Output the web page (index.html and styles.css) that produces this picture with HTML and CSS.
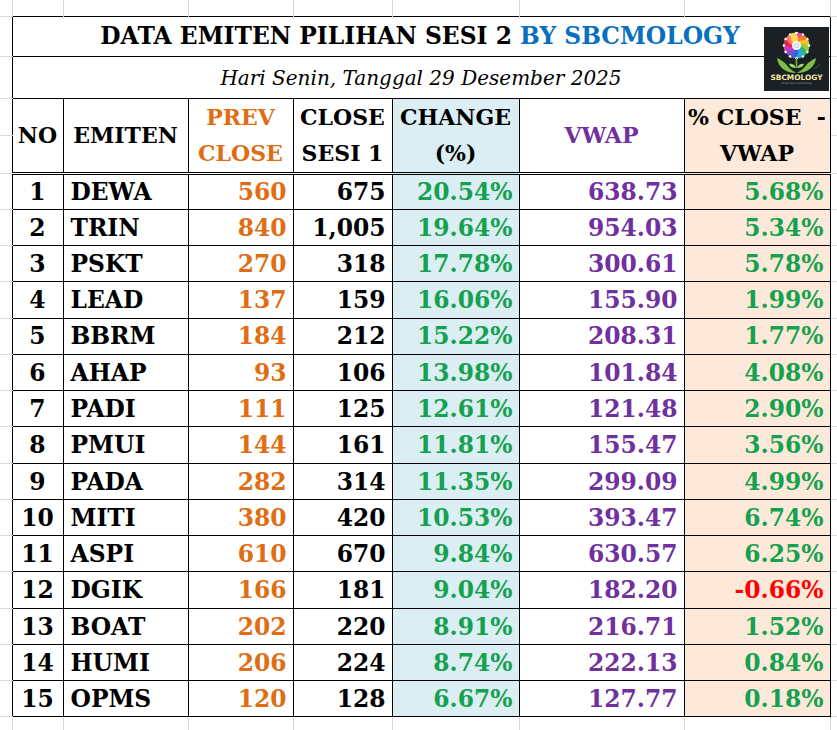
FILE: index.html
```html
<!DOCTYPE html>
<html lang="id">
<head>
<meta charset="utf-8">
<title>Data Emiten Pilihan Sesi 2</title>
<link rel="stylesheet" href="styles.css">
</head>
<body>
<div class="sheet-wrap">
<table class="sheet">
  <colgroup>
    <col class="w-gap-l"><col class="w-no"><col class="w-em"><col class="w-prev"><col class="w-close"><col class="w-chg"><col class="w-vwap"><col class="w-pct"><col class="w-gap-r">
  </colgroup>
  <tr class="band-top">
    <td class="g corner"></td><td class="g"></td><td class="g"></td><td class="g"></td><td class="g"></td><td class="g"></td><td class="g"></td><td class="g"></td><td class="g corner-r"></td>
  </tr>
  <tr class="r-title">
    <td class="gl"></td>
    <td colspan="7" class="title">DATA EMITEN PILIHAN SESI 2 <span class="blue">BY SBCMOLOGY</span></td>
    <td class="gr"></td>
  </tr>
  <tr class="r-sub">
    <td class="gl"></td>
    <td colspan="7" class="sub">Hari Senin, Tanggal 29 Desember 2025</td>
    <td class="gr"></td>
  </tr>
  <tr class="r-head">
    <td class="gl"></td>
    <th rowspan="2" class="h">NO</th>
    <th rowspan="2" class="h">EMITEN</th>
    <th rowspan="2" class="h orange">PREV<br>CLOSE</th>
    <th rowspan="2" class="h">CLOSE<br>SESI 1</th>
    <th rowspan="2" class="h bg-blue">CHANGE<br>(%)</th>
    <th rowspan="2" class="h purple">VWAP</th>
    <th rowspan="2" class="h bg-peach">% CLOSE&nbsp; -<br>VWAP</th>
    <td class="gr"></td>
  </tr>
  <tr class="r-head">
    <td class="gl"></td>
    <td class="gr"></td>
  </tr>
  <tr class="r"><td class="gl"></td><td class="d no">1</td><td class="d em">DEWA</td><td class="d num orange">560</td><td class="d num">675</td><td class="d num green bg-blue">20.54%</td><td class="d num purple">638.73</td><td class="d num green bg-peach">5.68%</td><td class="gr"></td></tr>
  <tr class="r"><td class="gl"></td><td class="d no">2</td><td class="d em">TRIN</td><td class="d num orange">840</td><td class="d num">1,005</td><td class="d num green bg-blue">19.64%</td><td class="d num purple">954.03</td><td class="d num green bg-peach">5.34%</td><td class="gr"></td></tr>
  <tr class="r"><td class="gl"></td><td class="d no">3</td><td class="d em">PSKT</td><td class="d num orange">270</td><td class="d num">318</td><td class="d num green bg-blue">17.78%</td><td class="d num purple">300.61</td><td class="d num green bg-peach">5.78%</td><td class="gr"></td></tr>
  <tr class="r"><td class="gl"></td><td class="d no">4</td><td class="d em">LEAD</td><td class="d num orange">137</td><td class="d num">159</td><td class="d num green bg-blue">16.06%</td><td class="d num purple">155.90</td><td class="d num green bg-peach">1.99%</td><td class="gr"></td></tr>
  <tr class="r"><td class="gl"></td><td class="d no">5</td><td class="d em">BBRM</td><td class="d num orange">184</td><td class="d num">212</td><td class="d num green bg-blue">15.22%</td><td class="d num purple">208.31</td><td class="d num green bg-peach">1.77%</td><td class="gr"></td></tr>
  <tr class="r"><td class="gl"></td><td class="d no">6</td><td class="d em">AHAP</td><td class="d num orange">93</td><td class="d num">106</td><td class="d num green bg-blue">13.98%</td><td class="d num purple">101.84</td><td class="d num green bg-peach">4.08%</td><td class="gr"></td></tr>
  <tr class="r"><td class="gl"></td><td class="d no">7</td><td class="d em">PADI</td><td class="d num orange">111</td><td class="d num">125</td><td class="d num green bg-blue">12.61%</td><td class="d num purple">121.48</td><td class="d num green bg-peach">2.90%</td><td class="gr"></td></tr>
  <tr class="r"><td class="gl"></td><td class="d no">8</td><td class="d em">PMUI</td><td class="d num orange">144</td><td class="d num">161</td><td class="d num green bg-blue">11.81%</td><td class="d num purple">155.47</td><td class="d num green bg-peach">3.56%</td><td class="gr"></td></tr>
  <tr class="r"><td class="gl"></td><td class="d no">9</td><td class="d em">PADA</td><td class="d num orange">282</td><td class="d num">314</td><td class="d num green bg-blue">11.35%</td><td class="d num purple">299.09</td><td class="d num green bg-peach">4.99%</td><td class="gr"></td></tr>
  <tr class="r"><td class="gl"></td><td class="d no">10</td><td class="d em">MITI</td><td class="d num orange">380</td><td class="d num">420</td><td class="d num green bg-blue">10.53%</td><td class="d num purple">393.47</td><td class="d num green bg-peach">6.74%</td><td class="gr"></td></tr>
  <tr class="r"><td class="gl"></td><td class="d no">11</td><td class="d em">ASPI</td><td class="d num orange">610</td><td class="d num">670</td><td class="d num green bg-blue">9.84%</td><td class="d num purple">630.57</td><td class="d num green bg-peach">6.25%</td><td class="gr"></td></tr>
  <tr class="r"><td class="gl"></td><td class="d no">12</td><td class="d em">DGIK</td><td class="d num orange">166</td><td class="d num">181</td><td class="d num green bg-blue">9.04%</td><td class="d num purple">182.20</td><td class="d num red bg-peach">-0.66%</td><td class="gr"></td></tr>
  <tr class="r"><td class="gl"></td><td class="d no">13</td><td class="d em">BOAT</td><td class="d num orange">202</td><td class="d num">220</td><td class="d num green bg-blue">8.91%</td><td class="d num purple">216.71</td><td class="d num green bg-peach">1.52%</td><td class="gr"></td></tr>
  <tr class="r"><td class="gl"></td><td class="d no">14</td><td class="d em">HUMI</td><td class="d num orange">206</td><td class="d num">224</td><td class="d num green bg-blue">8.74%</td><td class="d num purple">222.13</td><td class="d num green bg-peach">0.84%</td><td class="gr"></td></tr>
  <tr class="r"><td class="gl"></td><td class="d no">15</td><td class="d em">OPMS</td><td class="d num orange">120</td><td class="d num">128</td><td class="d num green bg-blue">6.67%</td><td class="d num purple">127.77</td><td class="d num green bg-peach">0.18%</td><td class="gr"></td></tr>
  <tr class="band-bot">
    <td class="b"></td><td class="b"></td><td class="b"></td><td class="b"></td><td class="b"></td><td class="b"></td><td class="b"></td><td class="b"></td><td class="b-last"></td>
  </tr>
</table>

<div class="logo">
  <svg viewBox="0 0 65 64" width="65" height="64" aria-label="SBCMOLOGY logo">
    <rect width="65" height="64" fill="#1b2025"/>
    <g transform="translate(32.5 18.5)">
      <g fill="#ffffff">
        <circle cx="0" cy="-12" r="1.8"/>
        <circle cx="0" cy="-12" r="1.8" transform="rotate(30)"/>
        <circle cx="0" cy="-12" r="1.8" transform="rotate(60)"/>
        <circle cx="0" cy="-12" r="1.8" transform="rotate(90)"/>
        <circle cx="0" cy="-12" r="1.8" transform="rotate(120)"/>
        <circle cx="0" cy="-12" r="1.8" transform="rotate(150)"/>
        <circle cx="0" cy="-12" r="1.8" transform="rotate(180)"/>
        <circle cx="0" cy="-12" r="1.8" transform="rotate(210)"/>
        <circle cx="0" cy="-12" r="1.8" transform="rotate(240)"/>
        <circle cx="0" cy="-12" r="1.8" transform="rotate(270)"/>
        <circle cx="0" cy="-12" r="1.8" transform="rotate(300)"/>
        <circle cx="0" cy="-12" r="1.8" transform="rotate(330)"/>
      </g>
      <g transform="rotate(15)">
        <ellipse cx="0" cy="-7.5" rx="3.6" ry="5.6" fill="#ee4d8f"/>
        <ellipse cx="0" cy="-7.5" rx="3.6" ry="5.6" fill="#f47c2c" transform="rotate(30)"/>
        <ellipse cx="0" cy="-7.5" rx="3.6" ry="5.6" fill="#f6c21b" transform="rotate(60)"/>
        <ellipse cx="0" cy="-7.5" rx="3.6" ry="5.6" fill="#9ccc3c" transform="rotate(90)"/>
        <ellipse cx="0" cy="-7.5" rx="3.6" ry="5.6" fill="#34b76f" transform="rotate(120)"/>
        <ellipse cx="0" cy="-7.5" rx="3.6" ry="5.6" fill="#27a9e1" transform="rotate(150)"/>
        <ellipse cx="0" cy="-7.5" rx="3.6" ry="5.6" fill="#3a62d6" transform="rotate(180)"/>
        <ellipse cx="0" cy="-7.5" rx="3.6" ry="5.6" fill="#7b4fd0" transform="rotate(210)"/>
        <ellipse cx="0" cy="-7.5" rx="3.6" ry="5.6" fill="#c43fbf" transform="rotate(240)"/>
        <ellipse cx="0" cy="-7.5" rx="3.6" ry="5.6" fill="#e2245c" transform="rotate(270)"/>
        <ellipse cx="0" cy="-7.5" rx="3.6" ry="5.6" fill="#ff7a5a" transform="rotate(300)"/>
        <ellipse cx="0" cy="-7.5" rx="3.6" ry="5.6" fill="#ffd84a" transform="rotate(330)"/>
      </g>
      <circle r="4.6" fill="#f4f6f8"/>
      <circle r="2.6" fill="#c9d3da"/>
      <circle r="1.2" fill="#ffffff"/>
    </g>
    <path d="M32.5 31 L32.5 41" stroke="#6fb93a" stroke-width="1.6"/>
    <path d="M13 31 C14 40 22 46 32 46 C27 43 24 40 21 36 C18 34 16 32 13 31 Z" fill="#7cc242"/>
    <path d="M52 31 C51 40 43 46 33 46 C38 43 41 40 44 36 C47 34 49 32 52 31 Z" fill="#7cc242"/>
    <path d="M25 37 C28 36 31 38 32 41 C29 41 26 40 25 37 Z" fill="#a2d860"/>
    <path d="M40 37 C37 36 34 38 33 41 C36 41 39 40 40 37 Z" fill="#a2d860"/>
    <path d="M50 42 C52 40 54 40 56 37" stroke="#3d8a6a" stroke-width="0.6" fill="none"/>
    <text x="32.5" y="53" class="logo-name">SBCMOLOGY</text>
    <text x="32.5" y="57" class="logo-tag">smart brain community</text>
  </svg>
</div>
</div>
</body>
</html>
```

FILE: styles.css
```css
html, body {
  margin: 0;
  padding: 0;
  background: #ffffff;
  overflow: hidden;
}

.sheet-wrap {
  position: relative;
  width: 837px;
  height: 730px;
  overflow: hidden;
}

.sheet {
  border-collapse: collapse;
  table-layout: fixed;
  width: 837px;
  font-family: "DejaVu Serif", "Liberation Serif", serif;
  color: #000;
}

.w-gap-l { width: 12px; }
.w-no { width: 51px; }
.w-em { width: 125px; }
.w-prev { width: 105px; }
.w-close { width: 99px; }
.w-chg { width: 127px; }
.w-vwap { width: 165px; }
.w-pct { width: 146px; }
.w-gap-r { width: 7px; }

td, th {
  padding: 0;
}

/* spreadsheet gridlines outside the table */
.band-top { height: 16px; }
.band-top .g {
  border-right: 1px solid #d9d9d9;
}
.band-top .corner {
  border-bottom: 1px solid #d9d9d9;
}
.band-top .corner-r {
  border-right: none;
  border-bottom: 1px solid #d9d9d9;
}
.gl, .gr {
  border-bottom: 1px solid #d9d9d9;
}
.band-bot { height: 14px; }
.band-bot .b {
  border-right: 1px solid #d9d9d9;
}

/* title rows */
.r-title { height: 40px; }
.r-sub { height: 42px; }

.title {
  border: 1px solid #000;
  text-align: center;
  font-weight: bold;
  font-size: 23.4px;
  line-height: 1;
  padding-top: 1px;
  padding-right: 2px;
}
.blue { color: #0b6fc0; }

.sub {
  border: 1px solid #000;
  text-align: center;
  font-style: italic;
  font-size: 20px;
  line-height: 1;
  padding-top: 1px;
}

/* header */
.r-head { height: 36.5px; }
.h {
  border: 1px solid #000;
  border-bottom: 3px double #000;
  font-weight: bold;
  font-size: 22px;
  line-height: 36.5px;
  text-align: center;
  vertical-align: middle;
  white-space: nowrap;
}

/* data */
.r { height: 36.27px; }
.d {
  border: 1px solid #000;
  font-weight: bold;
  font-size: 23.4px;
  line-height: 1;
  vertical-align: middle;
  padding-top: 2px;
  white-space: nowrap;
}
.no { text-align: center; }
.em { text-align: left; padding-left: 7px; }
.num { text-align: right; padding-right: 6px; }

.orange { color: #e06d14; }
.purple { color: #7030a0; }
.green { color: #15a14f; }
.red { color: #ff0000; }
.bg-blue { background: #daeef3; }
.bg-peach { background: #fde9d9; }

/* logo overlay */
.logo {
  position: absolute;
  left: 764px;
  top: 27px;
  width: 65px;
  height: 64px;
}
.logo svg { display: block; }
.logo-name {
  font-family: "DejaVu Sans", sans-serif;
  font-weight: bold;
  font-size: 7.4px;
  fill: #f2e6a0;
  text-anchor: middle;
}
.logo-tag {
  font-family: "DejaVu Sans", sans-serif;
  font-size: 2.6px;
  fill: #9aa3a8;
  text-anchor: middle;
}
```
